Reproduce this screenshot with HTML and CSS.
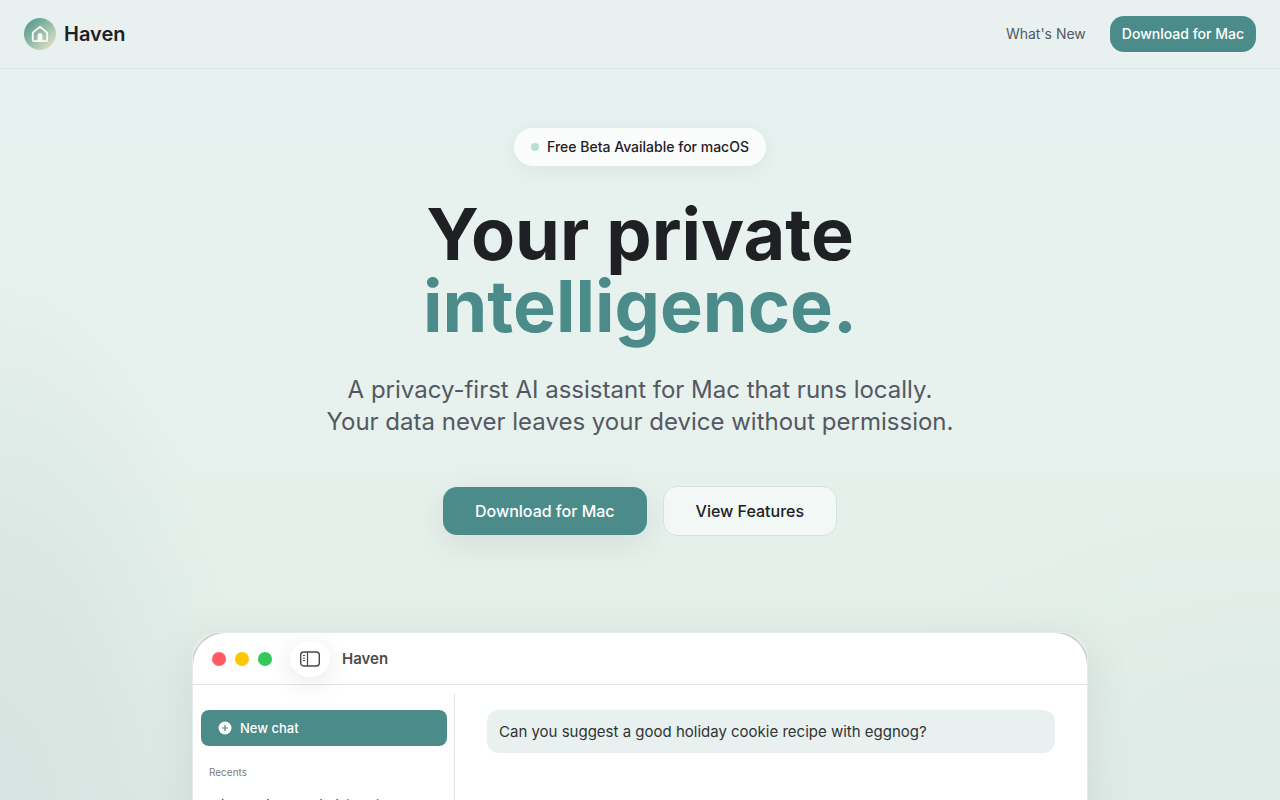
FILE: index.html
```html
<!DOCTYPE html>
<html lang="en">
<head>
    <meta charset="UTF-8">
    <meta name="viewport" content="width=device-width, initial-scale=1.0">
    <title>Haven</title>
    <link rel="stylesheet" href="styles.css">
</head>
<body>
    <header class="header">
        <a class="brand" href="#">
            <svg class="logo" viewBox="0 0 32 32" aria-hidden="true">
                <defs>
                    <linearGradient id="logoFill" x1="0.15" y1="0.15" x2="0.85" y2="0.85">
                        <stop offset="0" stop-color="#5e9e96"/>
                        <stop offset="0.5" stop-color="#94bda8"/>
                        <stop offset="1" stop-color="#d9dabf"/>
                    </linearGradient>
                </defs>
                <circle cx="16" cy="16" r="16" fill="url(#logoFill)"/>
                <path d="M8.8 14.6 16 8.8l7.2 5.8v7.4a1.2 1.2 0 0 1-1.2 1.2H10a1.2 1.2 0 0 1-1.2-1.2z" fill="none" stroke="#fafaf3" stroke-width="1.8" stroke-linejoin="round"/>
                <path d="M13.6 23v-5.5a2.4 2.4 0 0 1 4.8 0V23z" fill="#fafaf3"/>
            </svg>
            <span>Haven</span>
        </a>
        <nav class="nav">
            <a class="nav-link" href="#">What's New</a>
            <button class="button button-small">Download for Mac</button>
        </nav>
    </header>

    <main class="hero">
        <div class="badge"><span class="badge-dot"></span>Free Beta Available for macOS</div>
        <h1 class="title">Your private<br><span class="title-accent">intelligence.</span></h1>
        <p class="subtitle">A privacy-first AI assistant for Mac that runs locally.<br>Your data never leaves your device without permission.</p>
        <div class="actions">
            <button class="button button-primary">Download for Mac</button>
            <button class="button button-secondary">View Features</button>
        </div>

        <!-- App preview -->
        <section class="frame">
            <div class="window">
                <div class="window-bar">
                    <span class="lights">
                        <span class="light light-red"></span>
                        <span class="light light-yellow"></span>
                        <span class="light light-green"></span>
                    </span>
                    <button class="sidebar-toggle" aria-label="Toggle sidebar">
                        <svg viewBox="0 0 20 16" width="20" height="16" fill="none" stroke="#48484a">
                            <rect x="0.7" y="1" width="18.6" height="14" rx="3" stroke-width="1.4"/>
                            <path d="M7.5 1v14" stroke-width="1.2"/>
                            <path d="M3 4.5h2M3 7h2M3 9.5h2" stroke-width="1"/>
                        </svg>
                    </button>
                    <span class="window-title">Haven</span>
                </div>
                <div class="window-body">
                    <aside class="sidebar">
                        <button class="new-chat">
                            <svg viewBox="0 0 14 14" width="14" height="14" aria-hidden="true">
                                <circle cx="7" cy="7" r="6.5" fill="#fff"/>
                                <path d="M7 4v6M4 7h6" stroke="#4b8b89" stroke-width="1.2"/>
                            </svg>
                            New chat
                        </button>
                        <h2 class="recents">Recents</h2>
                        <a class="recent" href="#">advanced research data sets</a>
                    </aside>
                    <div class="chat">
                        <p class="message">Can you suggest a good holiday cookie recipe with eggnog?</p>
                    </div>
                </div>
            </div>
        </section>
    </main>
</body>
</html>
```
FILE: styles.css
```css
* {
    box-sizing: border-box;
}

body {
    margin: 0;
    height: 100vh;
    overflow: hidden;
    font-family: Inter, "Liberation Sans", sans-serif;
    color: #1f2024;
    background:
        radial-gradient(ellipse 240px 540px at 0 100%, #d6e5e1 0%, rgba(214, 229, 225, 0.75) 45%, rgba(214, 229, 225, 0) 100%),
        radial-gradient(ellipse 420px 320px at 100% 100%, #dfebe7 0%, rgba(223, 235, 231, 0) 100%),
        linear-gradient(#e8f1f0, #e7f1ed 50%, #e4efe9 80%, #deebe6);
}

a {
    color: inherit;
    text-decoration: none;
}

button {
    font-family: inherit;
    border: none;
    cursor: pointer;
}

.header {
    display: flex;
    justify-content: space-between;
    align-items: center;
    padding: 16px 24px;
    background: #e8f1f0;
    border-bottom: 1px solid #dae5e4;
}

.brand {
    display: flex;
    align-items: center;
    gap: 8px;
    font-size: 20px;
    font-weight: 600;
}

.logo {
    width: 32px;
    height: 32px;
}

.nav {
    display: flex;
    align-items: center;
    gap: 24px;
}

.nav-link {
    font-size: 14px;
    line-height: 20px;
    color: #535862;
}

.button {
    font-size: 16px;
    font-weight: 500;
    line-height: 24px;
    color: #fff;
    background: #4b8c8a;
    border-radius: 14px;
}

.button-small {
    padding: 8px 12px;
    font-size: 14px;
    line-height: 20px;
}

.hero {
    display: flex;
    flex-direction: column;
    align-items: center;
    padding: 59px 24px 0;
    text-align: center;
}

.badge {
    display: flex;
    align-items: center;
    gap: 8px;
    padding: 9px 17px;
    font-size: 14px;
    font-weight: 500;
    line-height: 20px;
    background: rgba(255, 255, 255, 0.8);
    border-radius: 20px;
    box-shadow: 0 4px 24px rgba(0, 40, 30, 0.06);
}

.badge-dot {
    width: 8px;
    height: 8px;
    border-radius: 50%;
    background: #b8e2cc;
}

.title {
    margin: 32px 0;
    font-size: 72px;
    font-weight: 700;
    line-height: 72px;
}

.title-accent {
    color: #4b8c8a;
}

.subtitle {
    margin: 0;
    font-size: 24px;
    line-height: 32px;
    color: #535862;
}

.actions {
    display: flex;
    align-items: center;
    gap: 16px;
    margin: 48px 0 96px;
}

.button-primary {
    padding: 12px 32px;
    box-shadow: 0 8px 32px rgba(0, 20, 10, 0.08);
}

.button-secondary {
    padding: 12px 32px;
    color: #1f2024;
    background: rgba(255, 255, 255, 0.5);
    border: 1px solid #d9dfe4;
}

.frame {
    width: 100%;
    max-width: 896px;
    border: 1px solid #e4ebea;
    border-radius: 24px 24px 0 0;
    background: #e9ebea;
    box-shadow: 0 8px 48px rgba(0, 30, 20, 0.08);
    overflow: hidden;
    text-align: left;
}

.window {
    min-height: 560px;
    border-radius: 32px 32px 0 0;
    background: #fff;
    box-shadow: 0 0 1px 1px rgba(0, 0, 0, 0.18);
}

.window-bar {
    display: flex;
    align-items: center;
    height: 52px;
    padding-left: 19px;
    border-bottom: 1px solid #e4e4e4;
}

.lights {
    display: flex;
    gap: 9px;
}

.light {
    width: 14px;
    height: 14px;
    border-radius: 50%;
}

.light-red {
    background: #ff5a5f;
}

.light-yellow {
    background: #fbc700;
}

.light-green {
    background: #34c759;
}

.sidebar-toggle {
    display: flex;
    align-items: center;
    justify-content: center;
    width: 40px;
    height: 36px;
    margin: 0 12px 0 18px;
    padding: 0;
    background: #fff;
    border-radius: 50%;
    box-shadow: 0 6px 28px rgba(0, 0, 0, 0.1);
}

.window-title {
    font-size: 15px;
    font-weight: 600;
    line-height: 20px;
    color: #4c4c4c;
}

.window-body {
    display: flex;
    padding-top: 8px;
}

.sidebar {
    width: 262px;
    min-height: 480px;
    padding: 17px 7px 0 8px;
    border-right: 1px solid #e4e4e4;
}

.new-chat {
    display: flex;
    align-items: center;
    gap: 8px;
    width: 100%;
    height: 36px;
    padding: 0 17px;
    font-size: 13px;
    font-weight: 500;
    color: #fff;
    background: #4b8b89;
    border-radius: 8px;
}

.recents {
    margin: 18px 8px 14px;
    font-size: 10px;
    font-weight: 400;
    line-height: 16px;
    color: #7c7c7c;
}

.recent {
    display: block;
    padding: 0 8px;
    font-size: 13px;
    line-height: 20px;
}

.chat {
    flex: 1;
    padding: 17px 32px;
}

.message {
    margin: 0;
    padding: 11px 12px;
    font-size: 15px;
    line-height: 21px;
    color: #2f3434;
    background: #e8f1f0;
    border-radius: 12px;
}
```
